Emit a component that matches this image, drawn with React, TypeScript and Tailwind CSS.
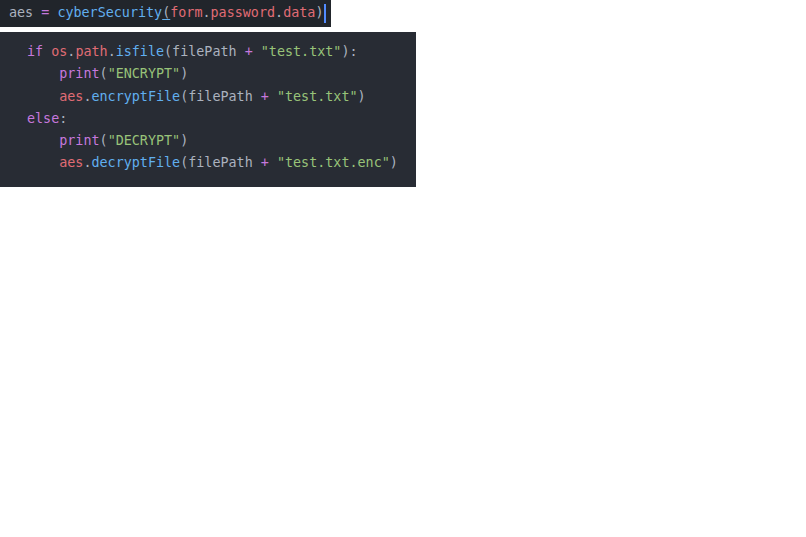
import React from 'react';

type Tok = [string, string];

const P = 'text-[#c678dd]';
const R = 'text-[#e06c75]';
const B = 'text-[#61afef]';
const G = 'text-[#98c379]';
const T = 'text-[#abb2bf]';

const lines: { indent: number; toks: Tok[] }[] = [
  {
    indent: 0,
    toks: [
      ['if', P], [' ', T], ['os', R], ['.', T], ['path', R], ['.', T], ['isfile', B],
      ['(filePath ', T], ['+', P], [' ', T], ['"test.txt"', G], ['):', T],
    ],
  },
  { indent: 1, toks: [['print', P], ['(', T], ['"ENCRYPT"', G], [')', T]] },
  {
    indent: 1,
    toks: [
      ['aes', R], ['.', T], ['encryptFile', B], ['(filePath ', T], ['+', P], [' ', T],
      ['"test.txt"', G], [')', T],
    ],
  },
  { indent: 0, toks: [['else', P], [':', T]] },
  { indent: 1, toks: [['print', P], ['(', T], ['"DECRYPT"', G], [')', T]] },
  {
    indent: 1,
    toks: [
      ['aes', R], ['.', T], ['decryptFile', B], ['(filePath ', T], ['+', P], [' ', T],
      ['"test.txt.enc"', G], [')', T],
    ],
  },
];

export default function App() {
  const mono = { fontFamily: '"DejaVu Sans Mono", "Liberation Mono", monospace' };
  return (
    <div className="min-h-screen bg-white">
      {/* Top editor line */}
      <div
        className="w-[331px] h-[27px] bg-[#21252b] pl-[9px] flex items-center text-[13.4px] whitespace-pre"
        style={mono}
      >
        <span className={T}>aes </span>
        <span className={P}>=</span>
        <span className={T}> </span>
        <span className={B}>cyberSecurity</span>
        <span className={`${T} underline decoration-[#61afef] underline-offset-2`}>(</span>
        <span className={R}>form</span>
        <span className={T}>.</span>
        <span className={R}>password</span>
        <span className={T}>.</span>
        <span className={R}>data</span>
        <span className={T}>)</span>
        <span className="ml-[1px] w-[2px] h-[19px] bg-[#528bff]" />
      </div>

      {/* Code block */}
      <div
        className="mt-[5px] w-[416px] h-[155px] bg-[#282c34] pt-[9px] pl-[27px] text-[13.4px] leading-[22.3px] whitespace-pre"
        style={mono}
      >
        {lines.map((l, i) => (
          <div key={i}>
            {l.indent ? <span>{'    '}</span> : null}
            {l.toks.map(([t, c], j) => (
              <span key={j} className={c}>{t}</span>
            ))}
          </div>
        ))}
      </div>
    </div>
  );
}
